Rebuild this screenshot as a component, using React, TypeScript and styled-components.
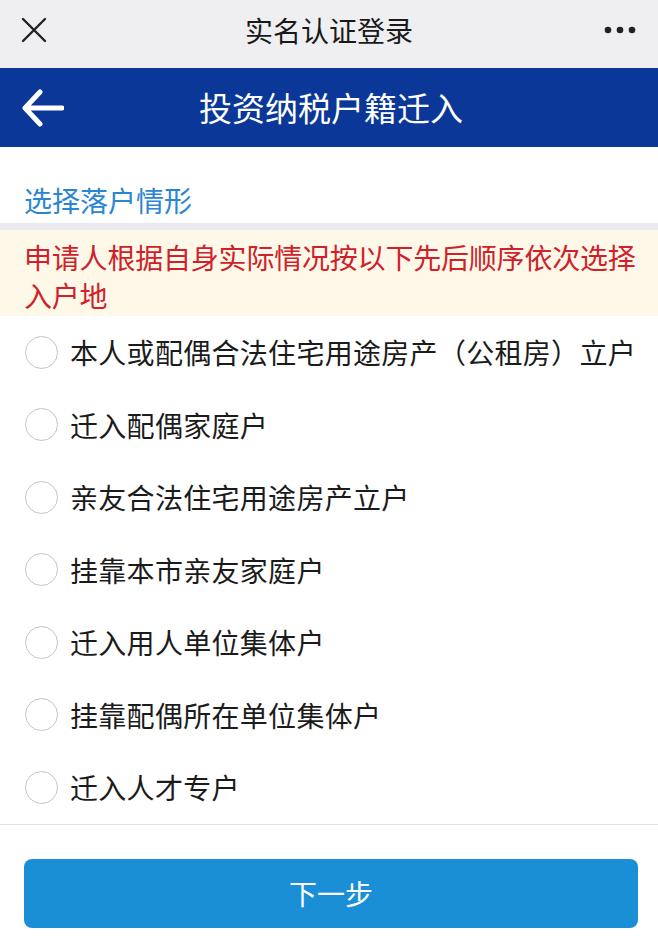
import React from "react";
import styled, { createGlobalStyle } from "styled-components";

const Global = createGlobalStyle`
  html, body { margin: 0; padding: 0; background: #ffffff; }
  body { font-family: "Noto Sans CJK SC", "Noto Sans", sans-serif; }
  * { box-sizing: border-box; }
`;

const Page = styled.div`
  width: 658px;
  height: 938px;
  display: flex;
  flex-direction: column;
  background: #ffffff;
  overflow: hidden;
`;

const TopBar = styled.div`
  height: 68px;
  background: #efeff2;
  display: flex;
  align-items: center;
  justify-content: space-between;
  padding: 0 22px 8px 18px;
  position: relative;
`;

const TopTitle = styled.div`
  position: absolute;
  left: 0;
  right: 0;
  top: 10px;
  text-align: center;
  font-size: 28px;
  line-height: 40px;
  color: #1a1a1a;
  pointer-events: none;
`;

const IconBox = styled.div`
  width: 32px;
  height: 32px;
  display: flex;
  align-items: center;
  justify-content: center;
`;

const NavBar = styled.div`
  height: 79px;
  background: #0b3898;
  display: flex;
  align-items: center;
  padding: 0 0 0 22px;
  position: relative;
`;

const NavTitle = styled.div`
  position: absolute;
  left: 0;
  right: 0;
  top: 17px;
  text-align: center;
  font-size: 33px;
  line-height: 44px;
  color: #ffffff;
  padding-left: 4px;
`;

const SectionHead = styled.div`
  height: 76px;
  padding: 33px 24px 0;
  font-size: 28px;
  line-height: 40px;
  color: #2b86d2;
`;

const Gap = styled.div`
  height: 7px;
  background: #e9e9ee;
`;

const Notice = styled.div`
  height: 86px;
  background: #fdf8e7;
  padding: 8px 18px 0 24px;
  font-size: 28px;
  line-height: 38px;
  color: #d0212a;
  letter-spacing: -0.2px;
`;

const List = styled.div`
  display: flex;
  flex-direction: column;
  border-bottom: 1px solid #e4e4e8;
`;

const Row = styled.label`
  height: 72.5px;
  display: flex;
  align-items: center;
  padding-left: 25px;
  gap: 12px;
  font-size: 28px;
  letter-spacing: 0.3px;
  color: #1b1b1b;
  white-space: nowrap;
`;

const Radio = styled.span`
  width: 33px;
  height: 33px;
  border-radius: 50%;
  border: 1.5px solid #c4c4c4;
  background: #ffffff;
  flex: none;
`;

const Footer = styled.div`
  flex: 1;
  padding: 34px 20px 0 24px;
  background: #ffffff;
`;

const NextButton = styled.button`
  width: 614px;
  height: 69px;
  border: none;
  border-radius: 8px;
  background: #1a8fd6;
  color: #ffffff;
  font-family: "Noto Sans CJK SC", "Noto Sans", sans-serif;
  font-size: 28px;
  padding: 0;
`;

const options = [
  "本人或配偶合法住宅用途房产（公租房）立户",
  "迁入配偶家庭户",
  "亲友合法住宅用途房产立户",
  "挂靠本市亲友家庭户",
  "迁入用人单位集体户",
  "挂靠配偶所在单位集体户",
  "迁入人才专户",
];

export default function App() {
  return (
    <Page>
      <Global />
      <TopBar>
        <IconBox>
          <svg width="26" height="26" viewBox="0 0 26 26">
            <path d="M2 2 L24 24 M24 2 L2 24" stroke="#222" strokeWidth="2.4" strokeLinecap="round" />
          </svg>
        </IconBox>
        <TopTitle>实名认证登录</TopTitle>
        <IconBox>
          <svg width="32" height="8" viewBox="0 0 32 8">
            <circle cx="4" cy="4" r="3.3" fill="#222" />
            <circle cx="16" cy="4" r="3.3" fill="#222" />
            <circle cx="28" cy="4" r="3.3" fill="#222" />
          </svg>
        </IconBox>
      </TopBar>
      <NavBar>
        <svg width="42" height="38" viewBox="0 0 42 38">
          <path d="M18 3 L3 19 L18 35 M4 19 L40 19" stroke="#ffffff" strokeWidth="5" strokeLinecap="round" strokeLinejoin="round" fill="none" />
        </svg>
        <NavTitle>投资纳税户籍迁入</NavTitle>
      </NavBar>
      <SectionHead>选择落户情形</SectionHead>
      <Gap />
      <Notice>申请人根据自身实际情况按以下先后顺序依次选择入户地</Notice>
      <List>
        {options.map((o) => (
          <Row key={o}>
            <Radio />
            {o}
          </Row>
        ))}
      </List>
      <Footer>
        <NextButton>下一步</NextButton>
      </Footer>
    </Page>
  );
}
